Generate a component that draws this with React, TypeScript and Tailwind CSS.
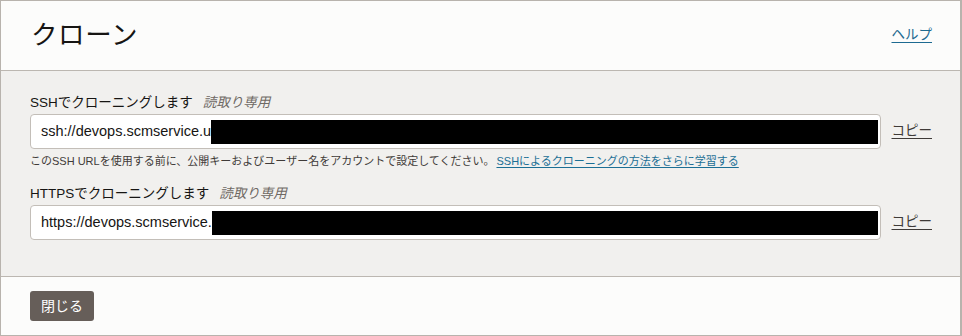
const FONT = "font-['Liberation_Sans','Noto_Sans_CJK_JP',sans-serif]";

function CloneField({ label, url }: { label: string; url: string }) {
  return (
    <div>
      <div className="mb-[1px] text-[13.5px] leading-[20px] text-[#161513]">
        {label}
        <span className="ml-[10px] italic text-[#6f6964]">読取り専用</span>
      </div>
      <div className="flex items-center">
        <div className="flex h-[35px] flex-1 items-center rounded-[4px] border border-[#c3beb8] bg-white pl-[10px] pr-[2px]">
          <span className="whitespace-nowrap text-[14.5px] text-[#161513]">{url}</span>
          <span className="h-[24px] flex-1 bg-black" />
        </div>
        <a className="ml-[11px] text-[13.5px] text-[#3f3b38] underline underline-offset-[3px]">
          コピー
        </a>
      </div>
    </div>
  );
}

export default function App() {
  return (
    <div className={`${FONT} flex h-[336px] w-[962px] flex-col border border-[#b8b3ad] border-r-2`}>
      <header className="flex h-[69px] items-center justify-between bg-[#fcfcfb] pl-[30px] pr-[28px]">
        <h1 className="text-[26.5px] tracking-[0.6px] text-[#161513]">クローン</h1>
        <a className="text-[13.5px] text-[#1d6a91] underline underline-offset-[3px]">ヘルプ</a>
      </header>
      <main className="h-[207px] border-y border-[#bcb7b1] bg-[#f1f0ee] pl-[29px] pr-[28px] pt-[22px]">
        <CloneField label="SSHでクローニングします" url="ssh://devops.scmservice.u" />
        <p className="mt-[4px] text-[11px] leading-[16px] text-[#3f3b38]">
          このSSH URLを使用する前に、公開キーおよびユーザー名をアカウントで設定してください。
          <a className="ml-[2px] text-[#1b6f95] underline underline-offset-2">
            SSHによるクローニングの方法をさらに学習する
          </a>
        </p>
        <div className="mt-[15px]">
          <CloneField label="HTTPSでクローニングします" url="https://devops.scmservice." />
        </div>
      </main>
      <footer className="flex flex-1 items-center bg-[#fcfcfb] pl-[29px]">
        <button className="h-[30px] w-[64px] rounded-[3px] bg-[#665e59] text-[14px] text-white">
          閉じる
        </button>
      </footer>
    </div>
  );
}
